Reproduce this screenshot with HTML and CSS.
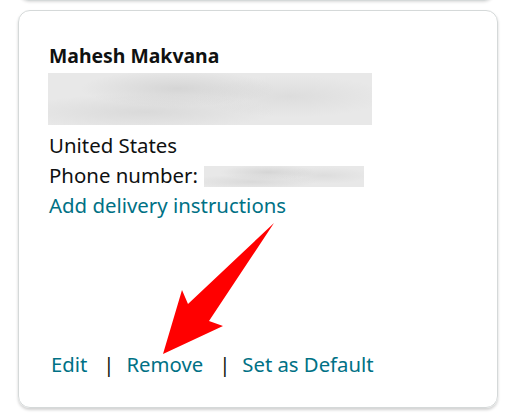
FILE: index.html
```html
<!DOCTYPE html>
<html>
<head>
<meta charset="utf-8">
<link rel="stylesheet" href="styles.css">
</head>
<body>
<div class="prev-card"></div>
<div class="card">
  <div class="address">
    <div class="name">Mahesh Makvana</div>
    <div class="blur blur-address"></div>
    <div class="line">United States</div>
    <div class="line">Phone number:<span class="blur blur-phone"></span></div>
    <div class="line"><a class="link" href="#">Add delivery instructions</a></div>
  </div>
  <div class="actions">
    <a class="link" href="#">Edit</a>
    <span class="sep">|</span>
    <a class="link" href="#">Remove</a>
    <span class="sep">|</span>
    <a class="link" href="#">Set as Default</a>
  </div>
  <svg class="arrow" width="512" height="419" viewBox="0 0 512 419">
    <polygon points="274,222 209,320 223,325 163,353 182,289 188,303" fill="#ff0000"/>
  </svg>
</div>
</body>
</html>
```
FILE: styles.css
```css
html, body {
  margin: 0;
  padding: 0;
  background: #ffffff;
}
body {
  width: 512px;
  height: 419px;
  overflow: hidden;
  font-family: "Noto Sans", "Liberation Sans", sans-serif;
  color: #0f1111;
}
.prev-card {
  margin: -20px 18px 0 19px;
  height: 20px;
  border: 1px solid #d5d9d9;
  border-top: none;
  border-radius: 0 0 10px 10px;
  box-shadow: 0 1px 3px rgba(0,0,0,0.15);
}
.card {
  position: relative;
  margin: 9px 14px 0 18px;
  height: 396px;
  border: 1px solid #d5d9d9;
  border-radius: 12px;
  box-shadow: 0 2px 3px rgba(0,0,0,0.18);
  padding: 0 0 0 30px;
  display: flex;
  flex-direction: column;
  justify-content: space-between;
}
.address {
  padding-top: 30px;
  font-size: 20.4px;
  line-height: 30px;
}
.name {
  font-weight: 700;
  font-size: 19.4px;
  line-height: 30px;
}
.blur {
  display: inline-block;
  background:
    radial-gradient(ellipse 30% 35% at 40% 30%, rgba(190,190,190,0.45), rgba(190,190,190,0) 100%),
    radial-gradient(ellipse 40% 35% at 30% 75%, rgba(190,190,190,0.35), rgba(190,190,190,0) 100%),
    radial-gradient(ellipse 30% 40% at 75% 45%, rgba(200,200,200,0.35), rgba(200,200,200,0) 100%),
    #e8e8e8;
}
.blur-address {
  display: block;
  width: 324px;
  height: 52px;
  margin: 2px 0 5px -1px;
}
.blur-phone {
  width: 160px;
  height: 21px;
  vertical-align: -4px;
  margin-left: 6px;
}
.link {
  color: #007185;
  text-decoration: none;
}
.actions {
  padding: 0 0 28px 2px;
  font-size: 20.3px;
  line-height: 30px;
  display: flex;
  align-items: center;
}
.sep {
  color: #0f1111;
  margin: 0 12px 0 16px;
}
.arrow {
  position: absolute;
  left: -19px;
  top: -10px;
  pointer-events: none;
}
```
